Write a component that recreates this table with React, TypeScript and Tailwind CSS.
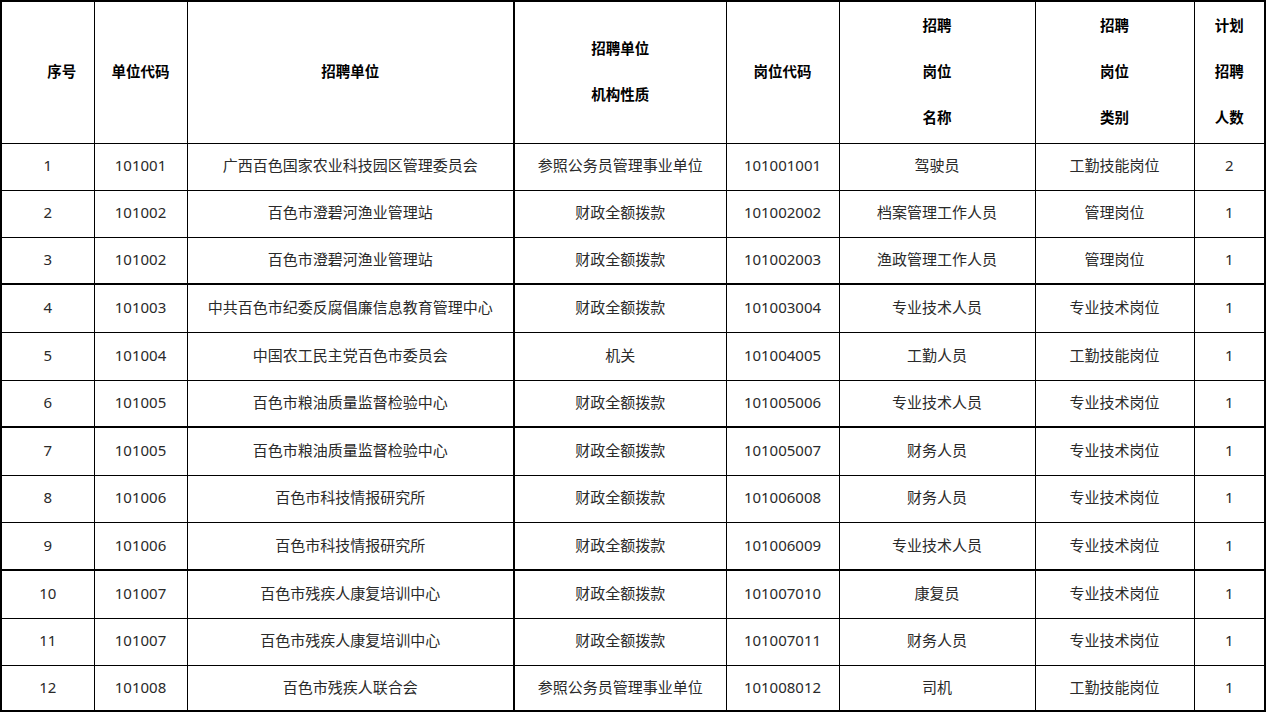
import React from "react";

const rows: [string, string, string, string, string, string, string, string][] = [
  ["1", "101001", "广西百色国家农业科技园区管理委员会", "参照公务员管理事业单位", "101001001", "驾驶员", "工勤技能岗位", "2"],
  ["2", "101002", "百色市澄碧河渔业管理站", "财政全额拨款", "101002002", "档案管理工作人员", "管理岗位", "1"],
  ["3", "101002", "百色市澄碧河渔业管理站", "财政全额拨款", "101002003", "渔政管理工作人员", "管理岗位", "1"],
  ["4", "101003", "中共百色市纪委反腐倡廉信息教育管理中心", "财政全额拨款", "101003004", "专业技术人员", "专业技术岗位", "1"],
  ["5", "101004", "中国农工民主党百色市委员会", "机关", "101004005", "工勤人员", "工勤技能岗位", "1"],
  ["6", "101005", "百色市粮油质量监督检验中心", "财政全额拨款", "101005006", "专业技术人员", "专业技术岗位", "1"],
  ["7", "101005", "百色市粮油质量监督检验中心", "财政全额拨款", "101005007", "财务人员", "专业技术岗位", "1"],
  ["8", "101006", "百色市科技情报研究所", "财政全额拨款", "101006008", "财务人员", "专业技术岗位", "1"],
  ["9", "101006", "百色市科技情报研究所", "财政全额拨款", "101006009", "专业技术人员", "专业技术岗位", "1"],
  ["10", "101007", "百色市残疾人康复培训中心", "财政全额拨款", "101007010", "康复员", "专业技术岗位", "1"],
  ["11", "101007", "百色市残疾人康复培训中心", "财政全额拨款", "101007011", "财务人员", "专业技术岗位", "1"],
  ["12", "101008", "百色市残疾人联合会", "参照公务员管理事业单位", "101008012", "司机", "工勤技能岗位", "1"],
];

const heights = [47, 47, 47, 48, 48, 47, 48, 47, 48, 48, 47, 46];
const thick = [2, 5, 8];

export default function App() {
  return (
    <div
      className="w-[1267px] h-[715px] bg-white overflow-hidden"
      style={{ fontFamily: '"Noto Sans", "Noto Sans CJK SC", sans-serif' }}
    >
      <table className="table-fixed border-collapse w-[1264px] border-2 border-black text-center">
        <colgroup>
          <col className="w-[93px]" />
          <col className="w-[93px]" />
          <col className="w-[327px]" />
          <col className="w-[212px]" />
          <col className="w-[113px]" />
          <col className="w-[196px]" />
          <col className="w-[159px]" />
          <col className="w-[71px]" />
        </colgroup>
        <thead>
          <tr className="h-[142px] text-[14.5px] font-bold text-black leading-[46px]">
            <th className="border border-black p-0 pl-[28px] pb-[2px]">序号</th>
            <th className="border border-black p-0 pb-[2px]">单位代码</th>
            <th className="border border-black p-0 pb-[2px]">招聘单位</th>
            <th className="border border-black border-l-2 p-0 pb-[2px]">
              <div>招聘单位</div>
              <div>机构性质</div>
            </th>
            <th className="border border-black p-0 pb-[2px]">岗位代码</th>
            <th className="border border-black p-0 pb-[2px]">
              <div>招聘</div>
              <div>岗位</div>
              <div>名称</div>
            </th>
            <th className="border border-black p-0 pb-[2px]">
              <div>招聘</div>
              <div>岗位</div>
              <div>类别</div>
            </th>
            <th className="border border-black p-0 pb-[2px]">
              <div>计划</div>
              <div>招聘</div>
              <div>人数</div>
            </th>
          </tr>
        </thead>
        <tbody className="text-[15px] text-[#2a2a2a]">
          {rows.map((r, i) => (
            <tr key={i} style={{ height: heights[i] }}>
              {r.map((c, j) => (
                <td
                  key={j}
                  className={
                    "border border-black p-0 pb-[2px] whitespace-nowrap" +
                    (j === 3 ? " border-l-2" : "") +
                    (thick.includes(i) ? " border-b-2" : "")
                  }
                >
                  {c}
                </td>
              ))}
            </tr>
          ))}
        </tbody>
      </table>
    </div>
  );
}
